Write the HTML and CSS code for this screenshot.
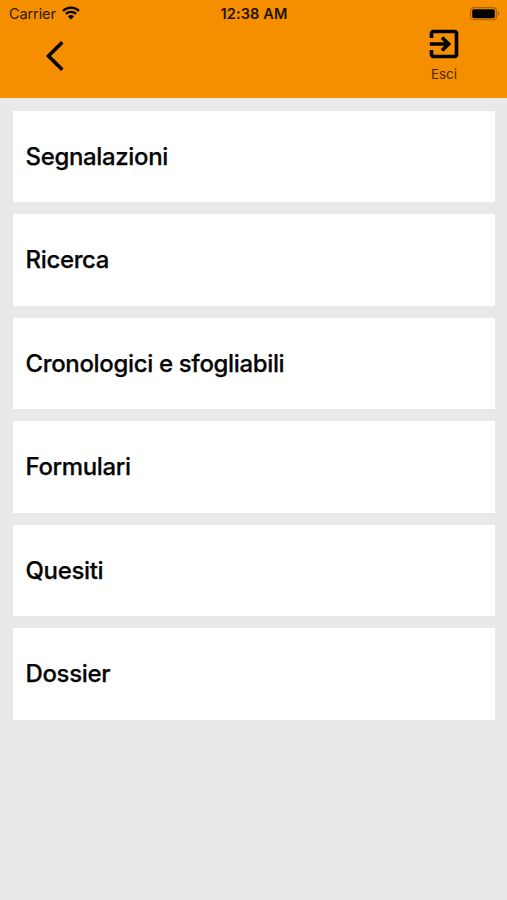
FILE: index.html
```html
<!DOCTYPE html>
<html lang="it">
<head>
<meta charset="utf-8">
<meta name="viewport" content="width=device-width, initial-scale=1">
<title>Menu</title>
<link rel="stylesheet" href="styles.css">
</head>
<body>
<header class="header">
  <div class="status">
    <div class="status-left">
      <span class="carrier">Carrier</span>
      <svg class="wifi" viewBox="0 0 18 14" width="18" height="14" aria-hidden="true">
        <path class="arc" d="M1 4.9a11.4 11.4 0 0 1 16 0M3.9 7.9a7.3 7.3 0 0 1 10.2 0"/>
        <path d="M9 13.5L5.9 10.4a4.4 4.4 0 0 1 6.2 0z"/>
      </svg>
    </div>
    <time class="clock">12:38 AM</time>
    <div class="status-right">
      <svg class="battery" viewBox="0 0 30 14" width="30" height="14" aria-hidden="true">
        <rect class="shell" x=".6" y=".6" width="25.8" height="12.2" rx="3.4"/>
        <rect x="2.2" y="2.2" width="22.6" height="9" rx="1.6"/>
        <path class="tip" d="M27.6 4.5v4.4q1.6-.6 1.6-2.2t-1.6-2.2z"/>
      </svg>
    </div>
  </div>
  <nav class="toolbar">
    <a class="back" aria-label="Indietro">
      <svg viewBox="0 0 20 32" width="20" height="32" aria-hidden="true"><path d="M17.3 2.2L3.5 16l13.8 13.8"/></svg>
    </a>
    <a class="exit">
      <svg viewBox="0 0 30 30" width="30" height="30" aria-hidden="true">
        <path d="M2.5 9V4.2a1.7 1.7 0 0 1 1.7-1.7h21.6a1.7 1.7 0 0 1 1.7 1.7v21.6a1.7 1.7 0 0 1-1.7 1.7H4.2a1.7 1.7 0 0 1-1.7-1.7V21M.8 15H19M13 8.4L19.6 15 13 21.6"/>
      </svg>
      <span>Esci</span>
    </a>
  </nav>
</header>
<main class="menu">
  <a class="card">Segnalazioni</a>
  <a class="card">Ricerca</a>
  <a class="card">Cronologici e sfogliabili</a>
  <a class="card">Formulari</a>
  <a class="card">Quesiti</a>
  <a class="card">Dossier</a>
</main>
</body>
</html>
```
FILE: styles.css
```css
* { box-sizing: border-box; }
body {
  margin: 0;
  min-height: 100vh;
  background: #e9e9e9;
  color: #060606;
  font-family: Inter, "Liberation Sans", sans-serif;
}
.header {
  height: 98.4px;
  background: #f58f00;
}
.status {
  display: grid;
  grid-template-columns: 1fr auto 1fr;
  height: 27px;
  padding: 0 7px 0 9px;
  align-items: center;
  font-size: 14.5px;
  line-height: 27px;
}
.status-left { display: flex; align-items: center; gap: 6px; color: #2b1900; }
.carrier { letter-spacing: -0.1px; }
.wifi { fill: #000; margin-top: -1px; }
.wifi .arc { fill: none; stroke: #000; stroke-width: 2.3; }
.clock { margin-left: -1px; font-weight: 600; letter-spacing: 0.15px; color: #1e1200; }
.status-right { display: flex; justify-content: flex-end; }
.battery .shell { fill: none; stroke: #a86300; stroke-width: 1.1; }
.battery .tip { fill: #a86300; }
.toolbar {
  display: flex;
  justify-content: space-between;
  padding: 2px 48px 0 45px;
}
.toolbar svg { display: block; fill: none; stroke: #000; stroke-width: 3.6; }
.back { padding-top: 11px; }
.exit {
  display: flex;
  flex-direction: column;
  align-items: center;
  font-size: 13.5px;
  line-height: 18px;
  color: #4a2b00;
}
.exit span { margin-top: 6px; }
.menu {
  display: flex;
  flex-direction: column;
  gap: 12.1px;
  padding: 12.4px 12.3px 0 13px;
}
.card {
  display: flex;
  align-items: center;
  height: 91.4px;
  padding-left: 12.5px;
  background: #fff;
  font-size: 24px;
  font-weight: 500;
  letter-spacing: -0.35px;
  -webkit-text-stroke: 0.25px #060606;
}
```
